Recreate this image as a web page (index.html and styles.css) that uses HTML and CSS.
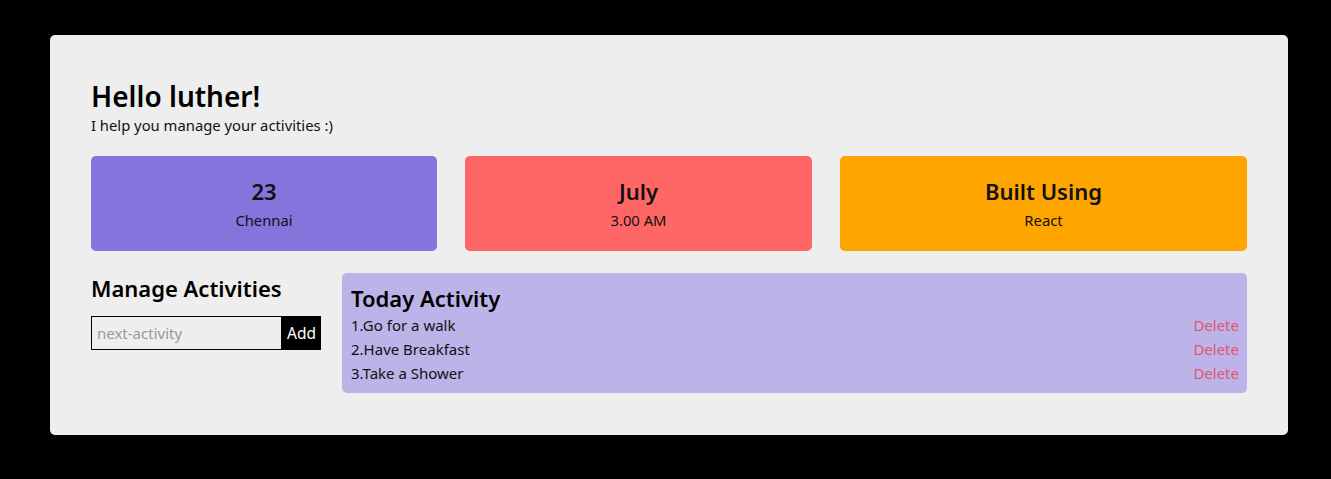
FILE: index.html
```html
<!DOCTYPE html>
<html lang="en">
<head>
<meta charset="utf-8">
<title>Activity Manager</title>
<link rel="stylesheet" href="styles.css">
</head>
<body>
<main class="app">
  <header class="greeting">
    <h1 class="greeting-title">Hello luther!</h1>
    <p class="greeting-sub">I help you manage your activities :)</p>
  </header>
  <section class="stats">
    <div class="stat stat-purple">
      <div class="stat-value">23</div>
      <div class="stat-label">Chennai</div>
    </div>
    <div class="stat stat-red">
      <div class="stat-value">July</div>
      <div class="stat-label">3.00 AM</div>
    </div>
    <div class="stat stat-orange">
      <div class="stat-value">Built Using</div>
      <div class="stat-label">React</div>
    </div>
  </section>
  <section class="bottom">
    <div class="manage">
      <h2 class="manage-title">Manage Activities</h2>
      <form class="add-form">
        <input class="add-input" type="text" placeholder="next-activity">
        <button class="add-btn" type="button">Add</button>
      </form>
    </div>
    <div class="today">
      <h2 class="today-title">Today Activity</h2>
      <ul class="list">
        <li class="item"><span>1.Go for a walk</span><span class="delete">Delete</span></li>
        <li class="item"><span>2.Have Breakfast</span><span class="delete">Delete</span></li>
        <li class="item"><span>3.Take a Shower</span><span class="delete">Delete</span></li>
      </ul>
    </div>
  </section>
</main>
</body>
</html>
```
FILE: styles.css
```css
* { box-sizing: border-box; }
html, body { margin: 0; padding: 0; background: #000; }
body {
  font-family: "Noto Sans", "Open Sans", sans-serif;
  color: #111;
  height: 479px;
  overflow: hidden;
}
.app {
  width: 1238px;
  height: 400px;
  margin: 35px 0 0 50px;
  background: #eeeeee;
  border-radius: 5px;
  padding: 42px 41px 0 41px;
}
.greeting-title {
  margin: 0;
  font-size: 28px;
  line-height: 38px;
  font-weight: 600;
  color: #000;
}
.greeting-sub {
  margin: 0;
  font-size: 14.8px;
  line-height: 20px;
  color: #111;
}
.stats {
  display: grid;
  grid-template-columns: 346px 347px 1fr;
  gap: 28px;
  margin-top: 21px;
}
.stat {
  height: 95px;
  border-radius: 5px;
  display: flex;
  flex-direction: column;
  align-items: center;
  justify-content: center;
}
.stat-purple { background: #8474db; }
.stat-red { background: #ff6666; }
.stat-orange { background: #ffa500; }
.stat-value {
  font-size: 22px;
  line-height: 30px;
  font-weight: 600;
  color: #111;
}
.stat-label {
  font-size: 14.8px;
  line-height: 22px;
  padding-top: 3px;
  color: #111;
}
.bottom {
  display: flex;
  gap: 21px;
  margin-top: 22px;
  align-items: flex-start;
}
.manage { width: 230px; }
.manage-title {
  margin: 0;
  font-size: 22px;
  line-height: 30px;
  font-weight: 600;
  color: #000;
}
.add-form {
  display: flex;
  margin-top: 13px;
}
.add-input {
  width: 191px;
  height: 34px;
  border: 1px solid #000;
  background: #eeeeee;
  font-family: inherit;
  font-size: 15px;
  padding: 0 5px;
  outline: none;
  margin: 0;
}
.add-input::placeholder { color: #9a9a9a; }
.add-btn {
  width: 39px;
  height: 34px;
  border: none;
  background: #000;
  color: #fff;
  font-family: inherit;
  font-size: 15.5px;
  padding: 0;
  margin: 0;
}
.today {
  flex: 1;
  height: 120px;
  background: #bcb3e9;
  border-radius: 5px;
  padding: 10px 8px 0 9px;
}
.today-title {
  margin: 0;
  font-size: 22px;
  line-height: 30px;
  font-weight: 600;
  color: #000;
}
.list {
  list-style: none;
  margin: 0;
  padding: 0;
}
.item {
  display: flex;
  justify-content: space-between;
  font-size: 15px;
  line-height: 24px;
  color: #111;
}
.delete { color: #e5566e; }
```
